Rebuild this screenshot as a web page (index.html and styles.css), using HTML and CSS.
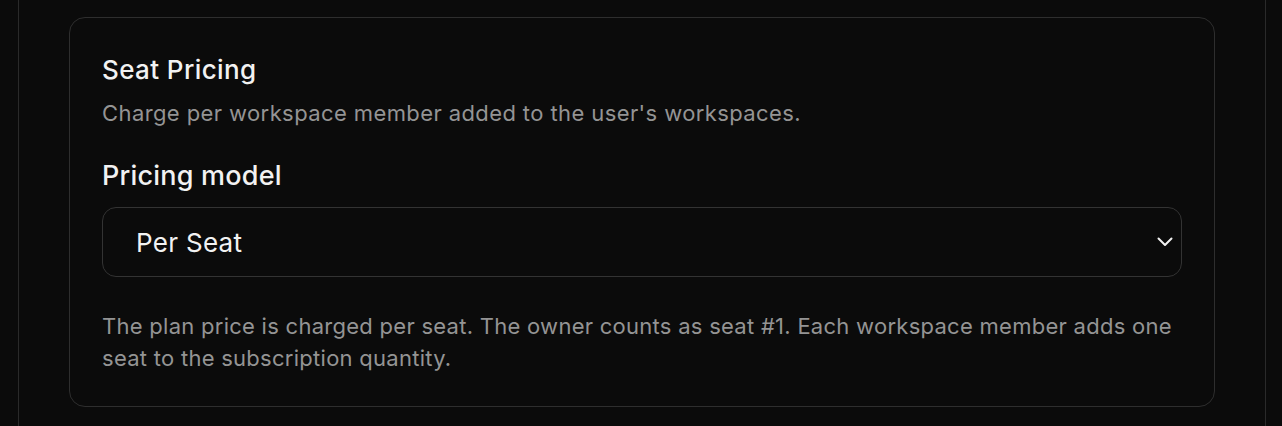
FILE: index.html
```html
<!DOCTYPE html>
<html lang="en">
<head>
    <meta charset="UTF-8">
    <meta name="viewport" content="width=device-width, initial-scale=1.0">
    <title>Seat Pricing</title>
    <link rel="stylesheet" href="styles.css">
</head>
<body>
    <div class="panel">
        <div class="card">
            <h3 class="card-title">Seat Pricing</h3>
            <p class="card-desc">Charge per workspace member added to the user's workspaces.</p>

            <label for="model" class="field-label">Pricing model</label>
            <div class="select-wrap">
                <select id="model" class="select">
                    <option value="per_seat">Per Seat</option>
                    <option value="flat">Flat</option>
                </select>
                <svg class="chevron" width="16" height="10" viewBox="0 0 16 10" fill="none" stroke="currentColor" stroke-width="2" stroke-linecap="round" stroke-linejoin="round"><path d="M1.5 1.5L8 8l6.5-6.5"/></svg>
            </div>

            <p class="help">The plan price is charged per seat. The owner counts as seat #1. Each workspace member adds one seat to the subscription quantity.</p>
        </div>
    </div>
</body>
</html>
```

FILE: styles.css
```css
body {
    margin: 0;
    background: #0b0b0b;
    font-family: Inter, "Noto Sans", sans-serif;
    color: #f2f2f2;
}
.panel {
    margin: 0 16px 0 18px;
    padding: 17px 50px 20px;
    border-left: 1px solid #2a2a2a;
    border-right: 1px solid #2a2a2a;
}
.card {
    border: 1px solid #2e2e2e;
    border-radius: 16px;
    padding: 34px 32px 32px;
}
.card-title {
    margin: 0;
    font-size: 26px;
    font-weight: 500;
    line-height: 36px;
    letter-spacing: 0.4px;
}
.card-desc {
    margin: 10px 0 0;
    font-size: 22px;
    line-height: 30px;
    letter-spacing: 0.4px;
    color: #949494;
}
.field-label {
    display: block;
    margin-top: 30px;
    font-size: 27px;
    font-weight: 500;
    line-height: 36px;
    letter-spacing: 0.2px;
}
.select-wrap {
    position: relative;
    margin-top: 13px;
}
.select {
    width: 100%;
    height: 70px;
    padding: 0 60px 0 33px;
    background: #0b0b0b;
    color: #f2f2f2;
    font: inherit;
    font-size: 26px;
    letter-spacing: 0.3px;
    border: 1px solid #333;
    border-radius: 14px;
    appearance: none;
    -webkit-appearance: none;
    box-sizing: border-box;
}
.chevron {
    position: absolute;
    right: 9px;
    top: 30px;
    color: #f2f2f2;
    pointer-events: none;
}
.help {
    margin: 33px 0 0;
    font-size: 22px;
    line-height: 32px;
    letter-spacing: 0.27px;
    color: #949494;
}
```
